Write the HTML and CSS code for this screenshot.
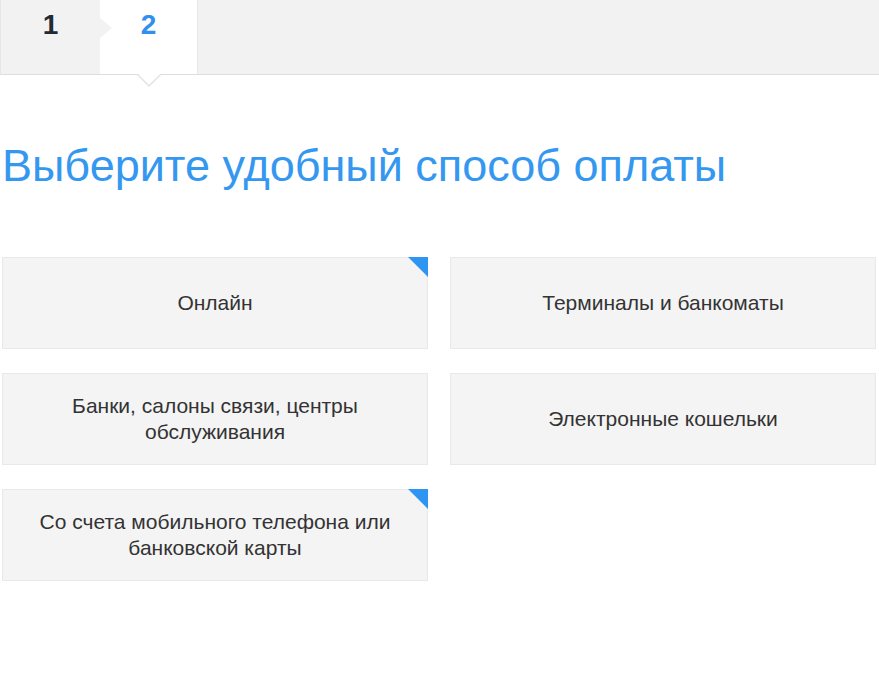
FILE: index.html
```html
<!DOCTYPE html>
<html lang="ru">
<head>
<meta charset="utf-8">
<title>Выберите удобный способ оплаты</title>
<link rel="stylesheet" href="styles.css">
</head>
<body>
<div class="steps">
  <div class="step step-done">1</div>
  <div class="step step-active">2</div>
</div>
<main class="content">
  <h1 class="title">Выберите удобный способ оплаты</h1>
  <div class="methods">
    <div class="method method-flag">Онлайн</div>
    <div class="method">Терминалы и банкоматы</div>
    <div class="method">Банки, салоны связи, центры обслуживания</div>
    <div class="method">Электронные кошельки</div>
    <div class="method method-flag">Со счета мобильного телефона или банковской карты</div>
  </div>
</main>
</body>
</html>
```
FILE: styles.css
```css
html, body {
  margin: 0;
  padding: 0;
  background: #ffffff;
  font-family: "Liberation Sans", Arial, sans-serif;
}

.steps {
  display: flex;
  height: 74px;
  background: #f2f2f2;
  border-bottom: 1px solid #dedede;
  border-left: 1px solid #e6e6e6;
}

.step {
  position: relative;
  box-sizing: border-box;
  padding-top: 8px;
  font-size: 28px;
  line-height: 34px;
  font-weight: bold;
  text-align: center;
}

.step-done {
  width: 99px;
  color: #222a33;
}

.step-done::after {
  content: "";
  position: absolute;
  top: 18px;
  right: -12px;
  width: 0;
  height: 0;
  border-top: 10px solid transparent;
  border-bottom: 10px solid transparent;
  border-left: 12px solid #f2f2f2;
  z-index: 2;
}

.step-active {
  width: 98px;
  background: #ffffff;
  color: #2f90f0;
  border-right: 1px solid #e8e8e8;
}

.step-active::before {
  content: "";
  position: absolute;
  left: 37px;
  bottom: -13px;
  width: 0;
  height: 0;
  border-left: 12px solid transparent;
  border-right: 12px solid transparent;
  border-top: 12px solid #e2e2e2;
}

.step-active::after {
  content: "";
  position: absolute;
  left: 38px;
  bottom: -11px;
  width: 0;
  height: 0;
  border-left: 11px solid transparent;
  border-right: 11px solid transparent;
  border-top: 11px solid #ffffff;
}

.content {
  padding: 0 0 0 2px;
}

.title {
  margin: 65px 0 66px 0;
  font-size: 45px;
  line-height: 51px;
  font-weight: normal;
  color: #3498f0;
}

.methods {
  display: grid;
  grid-template-columns: 426px 426px;
  column-gap: 22px;
  row-gap: 24px;
}

.method {
  position: relative;
  box-sizing: border-box;
  height: 92px;
  padding: 0 25px;
  display: flex;
  align-items: center;
  justify-content: center;
  text-align: center;
  background: #f4f4f4;
  border: 1px solid #e9e9e9;
  color: #333333;
  font-size: 21px;
  line-height: 26px;
}

.method-flag::after {
  content: "";
  position: absolute;
  top: -1px;
  right: -1px;
  width: 0;
  height: 0;
  border-top: 20px solid #2f95f2;
  border-left: 20px solid transparent;
}
```
